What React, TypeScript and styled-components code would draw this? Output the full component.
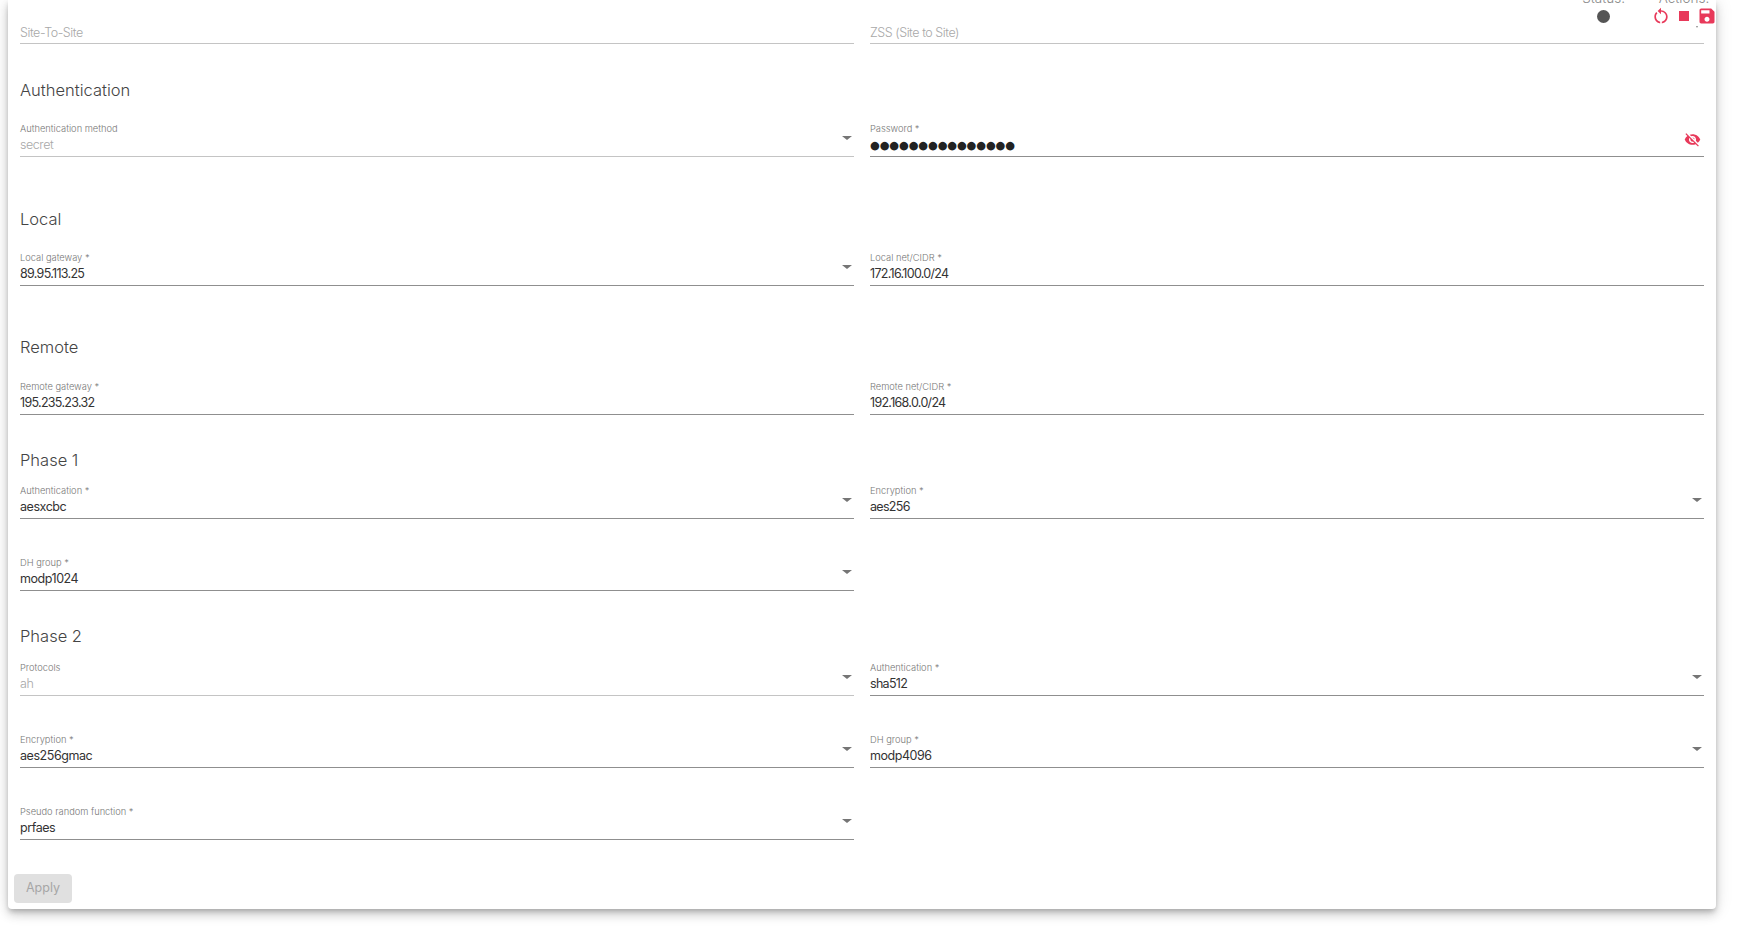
import React from "react";
import styled, { createGlobalStyle } from "styled-components";

const Global = createGlobalStyle`
  html, body { margin: 0; padding: 0; background: #fff; overflow: hidden; height: 933px; }
  body { font-family: Inter, "Open Sans", "Liberation Sans", sans-serif; }
`;

const Card = styled.main`
  width: 1708px;
  height: 909px;
  margin-left: 8px;
  box-sizing: border-box;
  background: #fff;
  border-radius: 0 0 4px 4px;
  box-shadow: 0 3px 5px -1px rgba(0,0,0,.2), 0 6px 10px 0 rgba(0,0,0,.14), 0 1px 18px 0 rgba(0,0,0,.12);
  padding: 0 12px;
  position: relative;
`;

const TopBar = styled.div`
  position: absolute;
  top: -10px;
  right: -1px;
  display: flex;
  gap: 26px;
  color: #8a8a8a;
  font-size: 13.5px;
`;

const TopGroup = styled.div`
  display: flex;
  flex-direction: column;
  align-items: center;
`;

const TopLabel = styled.span`
  line-height: 16px;
  font-weight: 300;
`;

const StatusDot = styled.span`
  width: 13px;
  height: 13px;
  border-radius: 50%;
  background: #555;
  margin-top: 4px;
`;

const Actions = styled.div`
  display: flex;
  align-items: center;
  gap: 3px;
  position: relative;
`;

const Caret = styled.span`
  position: absolute;
  right: 19px;
  top: 20px;
  width: 0;
  height: 0;
  border-left: 1.5px solid transparent;
  border-right: 1.5px solid transparent;
  border-top: 2px solid #888;
`;

const Grid = styled.div`
  display: grid;
  grid-template-columns: 834px 834px;
  column-gap: 16px;
`;

const SectionTitle = styled.h2<{ $h: number }>`
  grid-column: 1 / -1;
  margin: 0;
  height: ${(p) => p.$h}px;
  display: flex;
  align-items: flex-end;
  font-size: 16.5px;
  font-weight: 300;
  color: #444;
  line-height: 20px;
`;

const Field = styled.div<{ $h: number }>`
  height: ${(p) => p.$h}px;
  display: flex;
  flex-direction: column;
  justify-content: flex-end;
  position: relative;
`;

const FieldLabel = styled.label`
  font-size: 9.3px;
  line-height: 12px;
  color: #777;
  font-weight: 300;
`;

const FieldValue = styled.div<{ $muted?: boolean; $bare?: boolean; $numeric?: boolean }>`
  font-size: 12.5px;
  line-height: 16px;
  height: 22.5px;
  padding-top: ${(p) => (p.$bare ? 3.5 : 2.5)}px;
  box-sizing: border-box;
  letter-spacing: ${(p) => (p.$numeric ? -0.7 : -0.45)}px;
  color: ${(p) => (p.$muted ? "#a8a8a8" : "#333")};
  font-weight: ${(p) => (p.$muted ? 300 : 400)};
  border-bottom: 1px solid ${(p) => (p.$muted ? "#c4c4c4" : "#8f8f8f")};
`;

const Arrow = styled.span`
  position: absolute;
  right: 2px;
  bottom: 17px;
  width: 0;
  height: 0;
  border-left: 5px solid transparent;
  border-right: 5px solid transparent;
  border-top: 4.5px solid #757575;
`;

const PasswordDots = styled.span`
  font-family: "DejaVu Sans", sans-serif;
  font-size: 11.2px;
  letter-spacing: -0.1px;
  color: #222;
`;

const EyeBtn = styled.span`
  position: absolute;
  right: 3px;
  bottom: 9px;
  display: flex;
`;

const ApplyBtn = styled.button`
  position: absolute;
  left: 6px;
  bottom: 6px;
  width: 58px;
  height: 29px;
  border: none;
  border-radius: 4px;
  background: #e0e0e0;
  color: #a6a6a6;
  font: 400 12.5px Inter, sans-serif;
  padding: 0 0 2px;
`;

const RED = "#e8395a";

const Restart = () => (
  <svg width="20" height="20" viewBox="0 0 24 24" fill={RED}>
    <path d="M12 5V2L8 6l4 4V7c3.31 0 6 2.69 6 6 0 2.97-2.17 5.43-5 5.91v2.02c3.95-.49 7-3.85 7-7.93 0-4.42-3.58-8-8-8zm-6 8c0-1.65.67-3.15 1.76-4.24L6.34 7.34C4.9 8.79 4 10.79 4 13c0 4.08 3.05 7.44 7 7.93v-2.02c-2.83-.48-5-2.94-5-5.91z" />
  </svg>
);
const Stop = () => (
  <svg width="20" height="20" viewBox="0 0 24 24" fill={RED}>
    <path d="M6 6h12v12H6z" />
  </svg>
);
const Save = () => (
  <svg width="20" height="20" viewBox="0 0 24 24" fill={RED}>
    <path d="M17 3H5c-1.11 0-2 .9-2 2v14c0 1.1.89 2 2 2h14c1.1 0 2-.9 2-2V7l-4-4zm-5 16c-1.66 0-3-1.34-3-3s1.34-3 3-3 3 1.34 3 3-1.34 3-3 3zm3-10H5V5h10v4z" />
  </svg>
);
const EyeOff = () => (
  <svg width="17" height="17" viewBox="0 0 24 24" fill={RED}>
    <path d="M12 7c2.76 0 5 2.24 5 5 0 .65-.13 1.26-.36 1.83l2.92 2.92c1.51-1.26 2.7-2.89 3.43-4.75-1.73-4.39-6-7.5-11-7.5-1.4 0-2.74.25-3.98.7l2.16 2.16C10.74 7.13 11.35 7 12 7zM2 4.27l2.28 2.28.46.46C3.08 8.3 1.78 10.02 1 12c1.73 4.39 6 7.5 11 7.5 1.55 0 3.03-.3 4.38-.84l.42.42L19.73 22 21 20.73 3.27 3 2 4.27zM7.53 9.8l1.55 1.55c-.05.21-.08.43-.08.65 0 1.66 1.34 3 3 3 .22 0 .44-.03.65-.08l1.55 1.55c-.67.33-1.41.53-2.2.53-2.76 0-5-2.24-5-5 0-.79.2-1.53.53-2.2zm4.31-.78l3.15 3.15.02-.16c0-1.66-1.34-3-3-3l-.17.01z" />
  </svg>
);

type F = { label?: string; value: string; muted?: boolean; select?: boolean; numeric?: boolean };

const Input = ({ f, h }: { f: F; h: number }) => (
  <Field $h={h}>
    {f.label && <FieldLabel>{f.label}</FieldLabel>}
    <FieldValue $muted={f.muted} $bare={!f.label} $numeric={f.numeric}>{f.value}</FieldValue>
    {f.select && <Arrow />}
  </Field>
);

export default function App() {
  return (
    <>
      <Global />
      <Card>
        <TopBar>
          <TopGroup>
            <TopLabel>Status:</TopLabel>
            <StatusDot />
          </TopGroup>
          <TopGroup>
            <TopLabel>Actions:</TopLabel>
            <Actions>
              <Restart />
              <Stop />
              <Save />
              <Caret />
            </Actions>
          </TopGroup>
        </TopBar>
        <Grid>
          <Input h={44} f={{ value: "Site-To-Site", muted: true }} />
          <Input h={44} f={{ value: "ZSS (Site to Site)", muted: true }} />
          <SectionTitle $h={56}>Authentication</SectionTitle>
          <Input h={57} f={{ label: "Authentication method", value: "secret", muted: true, select: true }} />
          <Field $h={57}>
            <FieldLabel>Password *</FieldLabel>
            <FieldValue><PasswordDots>●●●●●●●●●●●●●●●</PasswordDots></FieldValue>
            <EyeBtn><EyeOff /></EyeBtn>
          </Field>
          <SectionTitle $h={72}>Local</SectionTitle>
          <Input h={57} f={{ label: "Local gateway *", value: "89.95.113.25", select: true, numeric: true }} />
          <Input h={57} f={{ label: "Local net/CIDR *", value: "172.16.100.0/24", numeric: true }} />
          <SectionTitle $h={71}>Remote</SectionTitle>
          <Input h={58} f={{ label: "Remote gateway *", value: "195.235.23.32", numeric: true }} />
          <Input h={58} f={{ label: "Remote net/CIDR *", value: "192.168.0.0/24", numeric: true }} />
          <SectionTitle $h={55}>Phase 1</SectionTitle>
          <Input h={49} f={{ label: "Authentication *", value: "aesxcbc", select: true }} />
          <Input h={49} f={{ label: "Encryption *", value: "aes256", select: true, numeric: true }} />
          <Input h={72} f={{ label: "DH group *", value: "modp1024", select: true }} />
          <div />
          <SectionTitle $h={55}>Phase 2</SectionTitle>
          <Input h={50} f={{ label: "Protocols", value: "ah", muted: true, select: true }} />
          <Input h={50} f={{ label: "Authentication *", value: "sha512", select: true, numeric: true }} />
          <Input h={72} f={{ label: "Encryption *", value: "aes256gmac", select: true }} />
          <Input h={72} f={{ label: "DH group *", value: "modp4096", select: true }} />
          <Input h={72} f={{ label: "Pseudo random function *", value: "prfaes", select: true }} />
          <div />
        </Grid>
        <ApplyBtn disabled>Apply</ApplyBtn>
      </Card>
    </>
  );
}
